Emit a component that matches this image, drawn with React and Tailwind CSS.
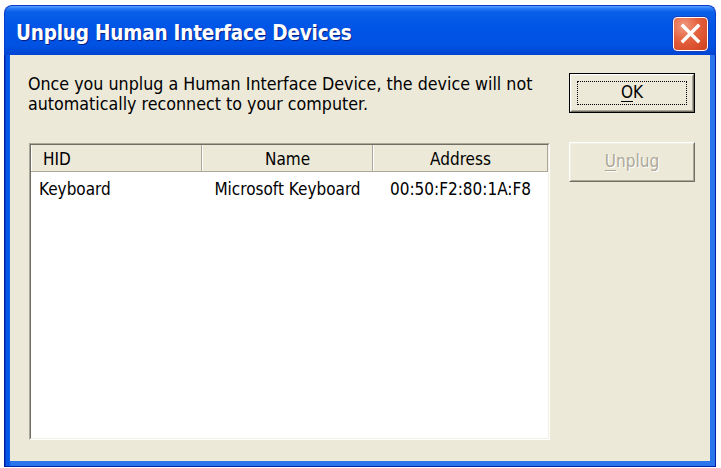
import React from "react";

const body = { fontFamily: '"DejaVu Sans Condensed","Liberation Sans",sans-serif' };

function CloseButton() {
  return (
    <div className="w-[35px] h-[34px] rounded-[4px] border border-white bg-[radial-gradient(circle_at_30%_25%,#f19a80_0%,#e4603d_45%,#cf3f1c_100%)] flex items-center justify-center shadow-[0_0_0_1px_#1c3fb5]">
      <svg width="21" height="21" viewBox="0 0 21 21">
        <path d="M3 3 L18 18 M18 3 L3 18" stroke="white" strokeWidth="3.4" strokeLinecap="square" />
      </svg>
    </div>
  );
}

function ClassicButton({ children, isDefault, disabled }) {
  const inner = (
    <div className="w-full h-full border border-t-white border-l-white border-b-[#716f64] border-r-[#716f64]">
      <div className="w-full h-full border border-t-[#f1efe2] border-l-[#f1efe2] border-b-[#aca899] border-r-[#aca899] flex items-center justify-center p-[5px]">
        {isDefault ? (
          <div className="w-full h-full border border-dotted border-black flex items-center justify-center">{children}</div>
        ) : (
          children
        )}
      </div>
    </div>
  );
  return (
    <div
      className={
        "w-[126px] h-[40px] bg-[#ece9d8] text-[17px] " +
        (isDefault ? "border border-black " : "") +
        (disabled ? "text-[#aca899] [text-shadow:1px_1px_0_#ffffff]" : "text-black")
      }
      style={body}
    >
      {inner}
    </div>
  );
}

function HeaderCell({ children, w, align }) {
  return (
    <div
      className={
        "h-full flex items-center border-r border-r-[#aca899] border-l border-l-white pt-[3px] " +
        (align === "left" ? "justify-start pl-[11px]" : "justify-center")
      }
      style={{ width: w }}
    >
      {children}
    </div>
  );
}

export default function App() {
  return (
    <div className="w-[721px] h-[468px] bg-white pt-[5px] pl-[4px]">
      <div className="w-[712px] flex flex-col">
        {/* Title bar */}
        <div className="h-[50px] rounded-t-[8px] bg-[linear-gradient(to_bottom,#5aa2ff_0%,#2a7cf6_5%,#0a5fe8_12%,#0054e6_45%,#0052e3_80%,#0045d2_100%)] flex items-center justify-between pl-[11px] pr-[7px] pt-[6px] border-x border-t border-[#0a3cc9]">
          <div
            className="text-white font-bold text-[20.5px] tracking-[-0.2px] [text-shadow:1px_1px_0_#0a1e80]"
            style={{ fontFamily: '"DejaVu Sans Condensed","Liberation Sans",sans-serif' }}
          >
            Unplug Human Interface Devices
          </div>
          <CloseButton />
        </div>
        {/* Frame */}
        <div className="bg-[linear-gradient(to_right,#001ea8_0px,#0a5ae6_1px,#0056e8_4px,#2a74ec_6px)] px-[5px] pb-[5px] border-x border-b border-[#0020a8] bg-[#0055e5]">
          <div className="h-[406px] bg-[#ece9d8] flex pt-[18px] pl-[19px] pr-[15px] pb-[21px] text-black" style={body}>
            <div className="w-[540px] flex flex-col">
              <div className="text-[17.7px] leading-[20px] pt-[1px] -ml-[1px]">
                Once you unplug a Human Interface Device, the device will not
                <br />
                automatically reconnect to your computer.
              </div>
              <div className="mt-[29px] w-[521px] flex-1 border border-t-[#aca899] border-l-[#aca899] border-b-white border-r-white">
                <div className="w-full h-full border border-t-[#716f64] border-l-[#716f64] border-b-[#f1efe2] border-r-[#f1efe2] bg-white flex flex-col text-[17px]">
                  <div className="h-[27px] bg-[#ece9d8] flex border-b border-b-[#aca899]">
                    <HeaderCell w={171} align="left">HID</HeaderCell>
                    <HeaderCell w={171}>Name</HeaderCell>
                    <HeaderCell w={175}>Address</HeaderCell>
                  </div>
                  <div className="flex h-[26px] items-center mt-[5px]">
                    <div className="w-[171px] pl-[8px]">Keyboard</div>
                    <div className="w-[171px] text-center">Microsoft Keyboard</div>
                    <div className="w-[175px] text-center">00:50:F2:80:1A:F8</div>
                  </div>
                </div>
              </div>
            </div>
            <div className="flex flex-col ml-[10px] gap-[29px]">
              <ClassicButton isDefault>
                <span>
                  <span className="underline underline-offset-[3px]">O</span>K
                </span>
              </ClassicButton>
              <ClassicButton disabled>
                <span>
                  <span className="underline underline-offset-[3px]">U</span>nplug
                </span>
              </ClassicButton>
            </div>
          </div>
        </div>
      </div>
    </div>
  );
}
